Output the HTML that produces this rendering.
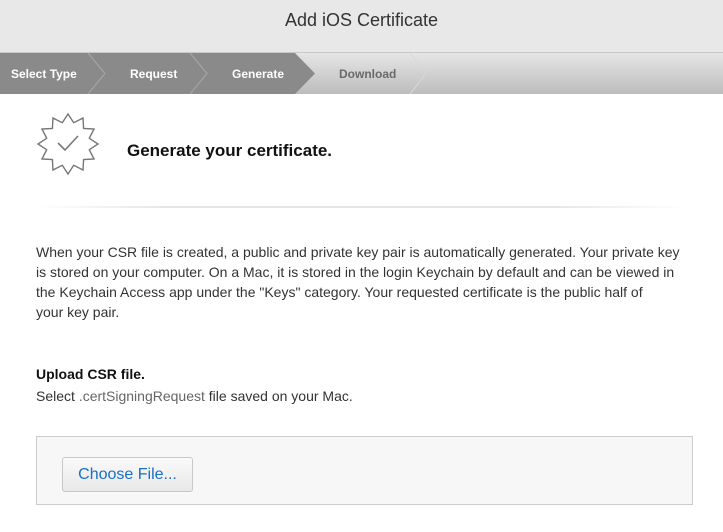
<!DOCTYPE html>
<html><head><meta charset="utf-8"><style>
html,body{margin:0;padding:0;width:723px;height:532px;overflow:hidden;background:#fff;font-family:"Liberation Sans",Arial,sans-serif;}
.hdr{position:absolute;left:0;top:0;width:723px;height:52px;background:#e8e8e8;border-bottom:1px solid #c8c8c8;}
.hdr span{position:absolute;left:0;width:723px;top:10px;text-align:center;font-size:18px;color:#333;}
.tabs{position:absolute;left:0;top:53px;width:723px;height:41px;}
.tab{position:absolute;top:13px;font-size:12px;font-weight:bold;color:#fff;}
p{margin:0}
</style></head><body>
<div class="hdr"><span>Add iOS Certificate</span></div>
<svg class="tabs" width="723" height="41" viewBox="0 0 723 41">
<defs><linearGradient id="g" x1="0" y1="0" x2="0" y2="1"><stop offset="0" stop-color="#e6e6e6"/><stop offset="1" stop-color="#bdbdbd"/></linearGradient></defs>
<rect width="723" height="41" fill="url(#g)"/>
<polygon points="0,0 295,0 315,20.5 295,41 0,41" fill="#8a8a8a"/>
<polyline points="88,0 105,20.5 88,41" fill="none" stroke="#a8a8a8" stroke-width="1"/>
<polyline points="190,0 207,20.5 190,41" fill="none" stroke="#a8a8a8" stroke-width="1"/>
<polyline points="410,0 426,20.5 410,41" fill="none" stroke="#d8d8d8" stroke-width="1"/>
</svg>
<div class="tab" style="left:11px;top:67px">Select Type</div>
<div class="tab" style="left:130px;top:67px">Request</div>
<div class="tab" style="left:232px;top:67px">Generate</div>
<div class="tab" style="left:339px;top:67px;color:#6a6a6a">Download</div>
<svg style="position:absolute;left:36px;top:112px" width="64" height="64" viewBox="-32 -32 64 64">
<polygon fill="none" stroke="#777" stroke-width="1.4" stroke-linejoin="miter" points="0,-30 5.7,-21.3 15,-26 15.6,-15.6 26,-15 21.3,-5.7 30,0 21.3,5.7 26,15 15.6,15.6 15,26 5.7,21.3 0,30 -5.7,21.3 -15,26 -15.6,15.6 -26,15 -21.3,5.7 -30,0 -21.3,-5.7 -26,-15 -15.6,-15.6 -15,-26 -5.7,-21.3"/>
<polyline points="-10,-1 -3,6 10,-8" fill="none" stroke="#777" stroke-width="1.6"/>
</svg>
<div style="position:absolute;left:127px;top:141px;font-size:17px;font-weight:bold;color:#111">Generate your certificate.</div>
<div style="position:absolute;left:36px;top:206px;width:650px;height:2px;background:linear-gradient(90deg,#fff,#e6e6e6 20%,#e6e6e6 80%,#fff)"></div>
<p style="position:absolute;left:36px;top:242px;width:690px;font-size:14px;line-height:20px;color:#333;white-space:nowrap">When your CSR file is created, a public and private key pair is automatically generated. Your private key<br>is stored on your computer. On a Mac, it is stored in the login Keychain by default and can be viewed in<br>the Keychain Access app under the "Keys" category. Your requested certificate is the public half of<br>your key pair.</p>
<div style="position:absolute;left:36px;top:366px;font-size:14px;font-weight:bold;color:#111">Upload CSR file.</div>
<div style="position:absolute;left:36px;top:388px;font-size:14px;color:#333">Select <span style="color:#666">.certSigningRequest</span> file saved on your Mac.</div>
<div style="position:absolute;left:36px;top:436px;width:655px;height:67px;background:#f7f7f7;border:1px solid #ccc"></div>
<div style="position:absolute;left:62px;top:457px;width:129px;height:33px;border:1px solid #c8c8c8;border-radius:3px;background:linear-gradient(#fafafa,#e8e8e8);font-size:16px;color:#1a6fc4;text-align:center;line-height:33px">Choose File...</div>
</body></html>
